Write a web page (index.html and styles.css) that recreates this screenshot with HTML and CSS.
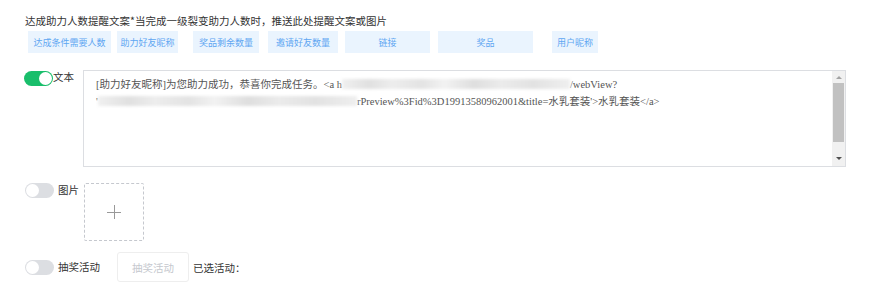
FILE: index.html
```html
<!DOCTYPE html>
<html lang="zh-CN">
<head>
<meta charset="utf-8">
<title>提醒文案</title>
<link rel="stylesheet" href="styles.css">
</head>
<body>
<div class="page">
  <div class="heading">达成助力人数提醒文案*当完成一级裂变助力人数时，推送此处提醒文案或图片</div>
  <div class="tags">
    <span class="tag w1">达成条件需要人数</span>
    <span class="tag w2">助力好友昵称</span>
    <span class="tag w3">奖品剩余数量</span>
    <span class="tag w4">邀请好友数量</span>
    <span class="tag w5">链接</span>
    <span class="tag w6">奖品</span>
    <span class="tag w7">用户昵称</span>
  </div>

  <div class="row row-text">
    <span class="switch on"><span class="knob"></span></span>
    <span class="label label-tight">文本</span>
    <div class="editor">
      <div class="editor-content">
        <div class="line">[助力好友昵称]为您助力成功，恭喜你完成任务。&lt;a h<span class="blur b1"></span>/webView?</div>
        <div class="line">'<span class="blur b2"></span>rPreview%3Fid%3D19913580962001&amp;title=水乳套装'&gt;水乳套装&lt;/a&gt;</div>
      </div>
      <div class="scrollbar">
        <span class="arrow up"></span>
        <span class="thumb"></span>
        <span class="arrow down"></span>
      </div>
    </div>
  </div>

  <div class="row row-image">
    <span class="switch"><span class="knob"></span></span>
    <span class="label label-image">图片</span>
    <div class="upload"><span class="plus"></span></div>
  </div>

  <div class="row row-lottery">
    <span class="switch"><span class="knob"></span></span>
    <span class="label label-lottery">抽奖活动</span>
    <span class="btn-disabled">抽奖活动</span>
    <span class="selected">已选活动：</span>
  </div>
</div>
</body>
</html>
```

FILE: styles.css
```css
* { box-sizing: border-box; }
html, body { margin: 0; padding: 0; background: #fff; }
body {
  font-family: "Noto Sans CJK SC", "Liberation Sans", sans-serif;
  color: #333;
}
.page {
  padding: 13px 0 0 25px;
  width: 878px;
  height: 296px;
}
.heading {
  font-size: 10.5px;
  line-height: 15px;
  color: #333;
  white-space: nowrap;
}
.tags {
  display: flex;
  margin: 3px 0 0 3px;
  height: 22px;
}
.tag {
  display: flex;
  align-items: center;
  justify-content: center;
  height: 22px;
  background: #eaf4fe;
  color: #5ea6f2;
  font-size: 9px;
  white-space: nowrap;
}
.w1 { width: 83px; }
.w2 { width: 61px; margin-left: 6px; }
.w3 { width: 66px; margin-left: 15px; }
.w4 { width: 70px; margin-left: 9px; }
.w5 { width: 85px; margin-left: 7px; }
.w6 { width: 95px; margin-left: 8px; }
.w7 { width: 46px; margin-left: 19px; }

.row { display: flex; align-items: flex-start; }
.row-text { margin-top: 17px; margin-left: -1px; }
.row-text .switch { margin-top: 1px; }
.row-image { margin-top: 16px; }
.row-lottery { margin-top: 11px; align-items: center; }

.switch {
  position: relative;
  display: inline-block;
  width: 29px;
  height: 15px;
  border-radius: 8px;
  background: #dcdee2;
  flex: none;
}
.switch.on { background: #19be6b; }
.knob {
  position: absolute;
  top: 1px;
  left: 1px;
  width: 13px;
  height: 13px;
  border-radius: 50%;
  background: #fff;
}
.switch.on .knob { left: 15px; }

.label {
  font-size: 10.5px;
  line-height: 14px;
  color: #333;
  white-space: nowrap;
}
.label-tight { width: 30px; }
.label-image { margin-left: 4px; width: 26px; }
.label-lottery { margin-left: 4px; width: 59px; }

.editor {
  display: flex;
  width: 763px;
  height: 97px;
  border: 1px solid #dcdee2;
  background: #fff;
}
.editor-content {
  flex: 1;
  padding: 5px 12px;
  font-family: "Liberation Serif", "Noto Sans CJK SC", serif;
  font-size: 10.5px;
  line-height: 17px;
  color: #555;
  white-space: nowrap;
  overflow: hidden;
}
.blur {
  display: inline-block;
  height: 10px;
  vertical-align: -1px;
  filter: blur(1.5px);
  background: linear-gradient(90deg, #f0f0f0 0%, #e0e0e0 12%, #ededed 22%, #e3e3e3 35%, #f2f2f2 45%, #dedede 58%, #ebebeb 70%, #e2e2e2 84%, #efefef 100%);
}
.b1 { width: 228px; }
.b2 { width: 259px; }

.scrollbar {
  display: flex;
  flex-direction: column;
  align-items: center;
  width: 13px;
  background: #f1f1f1;
  flex: none;
}
.arrow {
  width: 0;
  height: 0;
  border-left: 3px solid transparent;
  border-right: 3px solid transparent;
}
.arrow.up { border-bottom: 3px solid #a3a3a3; margin-top: 5px; }
.arrow.down { border-top: 3px solid #505050; margin-top: 15px; }
.thumb {
  width: 11px;
  height: 59px;
  margin-top: 4px;
  background: #c1c1c1;
}

.upload {
  position: relative;
  width: 60px;
  height: 58px;
  border: 1px dashed #c5c8ce;
  border-radius: 2px;
}
.plus::before, .plus::after {
  content: "";
  position: absolute;
  background: #999;
}
.plus::before { left: 22px; top: 28px; width: 14px; height: 1px; }
.plus::after { left: 29px; top: 21px; width: 1px; height: 14px; }

.btn-disabled {
  display: flex;
  align-items: center;
  justify-content: center;
  width: 72px;
  height: 30px;
  border: 1px solid #eeeeee;
  border-radius: 3px;
  color: #c5c8ce;
  font-size: 10.5px;
}
.selected {
  margin-left: 4px;
  font-size: 10.5px;
  color: #333;
}
```
